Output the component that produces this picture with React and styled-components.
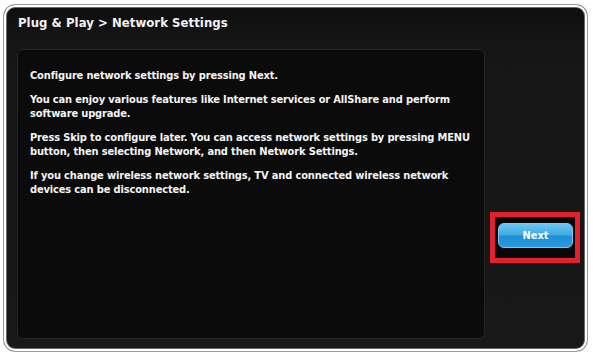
import styled, { createGlobalStyle } from "styled-components";

const GlobalStyle = createGlobalStyle`
  html, body {
    margin: 0;
    padding: 0;
    background: #ffffff;
  }
  body {
    font-family: "DejaVu Sans Condensed", "DejaVu Sans", sans-serif;
  }
`;

const Page = styled.div`
  width: 593px;
  height: 362px;
  padding: 4px 0 0 3px;
  box-sizing: border-box;
`;

const Frame = styled.div`
  width: 585px;
  height: 348px;
  box-sizing: border-box;
  border: 1px solid #9a9a9a;
  border-radius: 12px;
  background: linear-gradient(#0e0e0e 0, #161616 40px, #181818 100%);
  box-shadow: inset 0 0 0 2px #ffffff, inset 0 0 0 3px #6a6a6a;
  display: flex;
  flex-direction: column;
  overflow: hidden;
`;

const Header = styled.div`
  height: 44px;
  padding: 10px 0 0 14px;
  box-sizing: border-box;
  color: #f2f2f2;
  font-size: 13px;
  font-weight: bold;
  letter-spacing: 0.05px;
`;

const Body = styled.div`
  display: flex;
  padding-left: 13px;
`;

const Panel = styled.div`
  width: 468px;
  height: 290px;
  box-sizing: border-box;
  background: #0b0b0b;
  border: 1px solid #262626;
  border-radius: 6px;
  padding: 19px 0 0 12px;
`;

const Para = styled.p`
  margin: 0 0 9.5px;
  color: #f4f4f4;
  font-size: 11px;
  font-weight: bold;
  line-height: 14.3px;
  letter-spacing: -0.15px;
  white-space: nowrap;
`;

const Side = styled.div`
  padding: 163px 0 0 5px;
`;

const Highlight = styled.div`
  width: 90px;
  height: 51px;
  box-sizing: border-box;
  border: 5px solid #e3202b;
  background: #080808;
  padding: 6px 0 0 3px;
`;

const Button = styled.button`
  width: 75px;
  height: 25px;
  box-sizing: border-box;
  border: 1px solid #7cc8f0;
  border-radius: 6px;
  background: linear-gradient(#6cc6f2 0, #3eaae6 48%, #1f8ed6 52%, #2a98dc 100%);
  color: #ffffff;
  font-family: "DejaVu Sans Condensed", "DejaVu Sans", sans-serif;
  font-size: 11px;
  font-weight: bold;
  padding: 0;
  cursor: pointer;
`;

const paragraphs = [
  ["Configure network settings by pressing Next."],
  [
    "You can enjoy various features like Internet services or AllShare and perform",
    "software upgrade.",
  ],
  [
    "Press Skip to configure later. You can access network settings by pressing MENU",
    "button, then selecting Network, and then Network Settings.",
  ],
  [
    "If you change wireless network settings, TV and connected wireless network",
    "devices can be disconnected.",
  ],
];

export default function App() {
  return (
    <Page>
      <GlobalStyle />
      <Frame>
        <Header>Plug &amp; Play &gt; Network Settings</Header>
        <Body>
          <Panel>
            {paragraphs.map((lines, i) => (
              <Para key={i}>
                {lines.map((line, j) => (
                  <span key={j}>
                    {j > 0 && <br />}
                    {line}
                  </span>
                ))}
              </Para>
            ))}
          </Panel>
          <Side>
            <Highlight>
              <Button>Next</Button>
            </Highlight>
          </Side>
        </Body>
      </Frame>
    </Page>
  );
}
